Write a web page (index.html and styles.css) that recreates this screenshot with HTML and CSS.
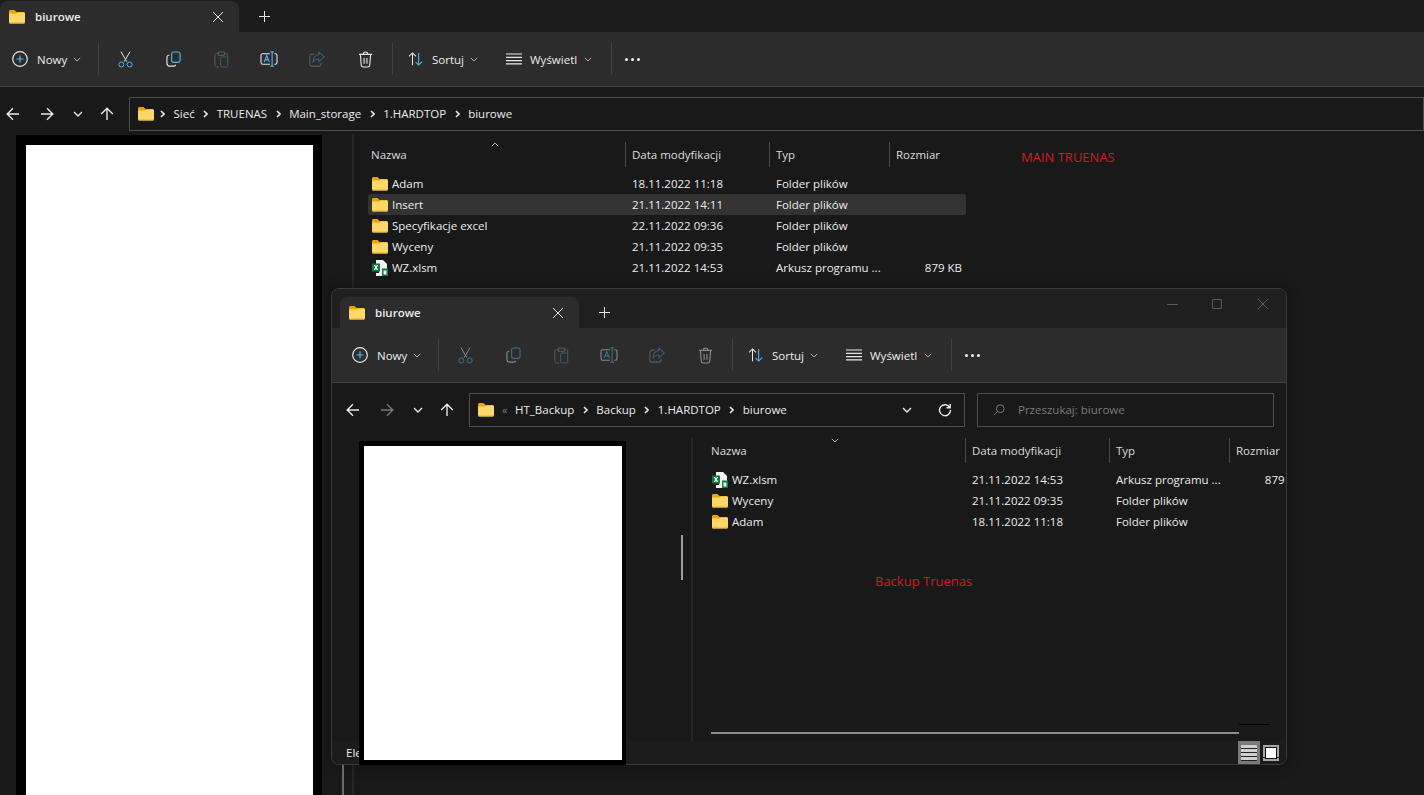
FILE: index.html
```html
<!DOCTYPE html>
<html lang="pl">
<head>
<meta charset="utf-8">
<title>biurowe</title>
<link rel="stylesheet" href="styles.css">
</head>
<body>
<svg class="defs" width="0" height="0" aria-hidden="true">
  <symbol id="i-folder" viewBox="0 0 16 16">
    <path class="f-back" d="M0 2.500C0 1.700.6 1 1.500 1h4l2 2h7C15.300 3 16 3.700 16 4.500V7H0z"/>
    <path class="f-front" d="M0 4.500h7.500l1.500-1h5.500c.8 0 1.500.7 1.500 1.500v8c0 .9-.7 1.500-1.500 1.500h-13C.6 14.500 0 13.900 0 13z"/>
    <path class="f-edge" d="M0 13.500h16v.3c0 .4-.7.7-1.500.7h-13C.6 14.500 0 14.200 0 13.800z"/>
  </symbol>
  <symbol id="i-excel" viewBox="0 0 16 16">
    <path class="x-paper" d="M4 0h7l4 4v5h-3v4h3v3H4v-3h3V4H4z"/>
    <rect class="x-green" x="0" y="3.500" width="8" height="8"/>
    <path class="x-letter" d="M1.800 5h1.400L4 6.500 4.800 5h1.400L4.800 7.500 6.200 10H4.800L4 8.500 3.200 10H1.800L3.200 7.500z"/>
    <rect class="x-green" x="10" y="8.500" width="6" height="7.500"/>
    <rect class="x-paper" x="11.500" y="10.500" width="3" height="4"/>
  </symbol>
  <symbol id="i-new" viewBox="0 0 16 16">
    <circle class="s-w" cx="8" cy="8" r="7.300"/>
    <path class="s-b" d="M8 4.500v7M4.500 8h7"/>
  </symbol>
  <symbol id="i-cut" viewBox="0 0 18 20">
    <path class="s-w" d="M3.500 0.500 10.500 12.500M14.500 0.500 7.500 12.500"/>
    <circle class="s-b" cx="4" cy="16" r="3"/>
    <circle class="s-b" cx="14" cy="16" r="3"/>
  </symbol>
  <symbol id="i-copy" viewBox="0 0 16 18">
    <rect class="s-b" x="6" y="1" width="9" height="11" rx="2"/>
    <path class="s-w" d="M3.500 4.500H3C1.900 4.500 1 5.400 1 6.500V13c0 1.700 1.300 3 3 3h4.500c.8 0 1.500-.6 1.800-1.400"/>
  </symbol>
  <symbol id="i-paste" viewBox="0 0 18 20">
    <path class="s-g" d="M5 3H3C1.900 3 1 3.900 1 5v12c0 1.100.9 2 2 2h3M13 3h2c.9 0 1.500.6 1.500 1.500V7M5.500 1h7v4h-7z"/>
    <rect class="s-bd" x="8" y="7" width="8.500" height="12" rx="1.500"/>
  </symbol>
  <symbol id="i-rename" viewBox="0 0 20 18">
    <path class="s-w" d="M11 3H3C1.900 3 1 3.900 1 5v8c0 1.100.9 2 2 2h8M16 3h1c1.100 0 2 .9 2 2v8c0 1.100-.9 2-2 2h-1"/>
    <path class="s-b" d="M11.500 1h4M13.500 1v16M11.500 17h4M4.500 12.500 7.500 5 10.500 12.500M5.500 10h4"/>
  </symbol>
  <symbol id="i-share" viewBox="0 0 18 18">
    <path class="s-g" d="M6 3.500H3.500C2.100 3.500 1 4.600 1 6v8.500C1 15.900 2.100 17 3.500 17H11c1.400 0 2.500-1.100 2.500-2.500V13"/>
    <path class="s-bd" d="M11 1 17 6.500 11 12V9C8 9 6 10 4.500 13 4.500 8 7 4.500 11 4z"/>
  </symbol>
  <symbol id="i-trash" viewBox="0 0 16 18">
    <path class="s-w" d="M1 3.500h14M5.500 3.500C5.500 2 6.500 1 8 1s2.500 1 2.500 2.500M2.500 3.500 3.500 15c.1 1.100 1 2 2 2h5c1 0 1.900-.9 2-2l1-11.500M6.500 7.500v6M9.500 7.500v6"/>
  </symbol>
  <symbol id="i-sort" viewBox="0 0 18 16">
    <path class="s-w" d="M5 15V1M1 5 5 1 9 5"/>
    <path class="s-b" d="M12 1v14M8.500 11.500 12 15 16 11"/>
  </symbol>
  <symbol id="i-view" viewBox="0 0 16 12">
    <path class="s-w" d="M0 1h16M0 4.300h16M0 7.600h16M0 10.900h16"/>
  </symbol>
  <symbol id="i-chev" viewBox="0 0 8 5"><path class="s-c" d="M.8.800 4 4 7.200.800"/></symbol>
  <symbol id="i-left" viewBox="0 0 14 14"><path class="s-n" d="M13 7H1.500M7 1.200 1.200 7 7 12.800"/></symbol>
  <symbol id="i-right" viewBox="0 0 14 14"><path class="s-n" d="M1 7h11.500M7 1.200 12.800 7 7 12.800"/></symbol>
  <symbol id="i-up" viewBox="0 0 14 14"><path class="s-n" d="M7 13V1.500M1.200 7 7 1.200 12.800 7"/></symbol>
  <symbol id="i-down" viewBox="0 0 10 6"><path class="s-n" d="M1 1 5 5 9 1"/></symbol>
  <symbol id="i-crumb" viewBox="0 0 5 8"><path class="s-k" d="M1 1 4 4 1 7"/></symbol>
</svg>

<!-- tylne okno -->
<main class="win win-main">
  <header class="tabbar">
    <div class="tab">
      <svg class="ico-16"><use href="#i-folder"/></svg>
      <span class="tab-title">biurowe</span>
      <span class="tab-x"></span>
    </div>
    <span class="tab-plus"></span>
  </header>
  <div class="toolbar">
    <div class="tb-new"><svg class="ico-16"><use href="#i-new"/></svg><span>Nowy</span><svg class="chev"><use href="#i-chev"/></svg></div>
    <i class="tb-sep"></i>
    <div class="tb-actions">
      <span class="tb-act"><svg class="ico-cut"><use href="#i-cut"/></svg></span>
      <span class="tb-act"><svg class="ico-copy"><use href="#i-copy"/></svg></span>
      <span class="tb-act dim"><svg class="ico-cut"><use href="#i-paste"/></svg></span>
      <span class="tb-act"><svg class="ico-ren"><use href="#i-rename"/></svg></span>
      <span class="tb-act dim"><svg class="ico-share"><use href="#i-share"/></svg></span>
      <span class="tb-act"><svg class="ico-copy"><use href="#i-trash"/></svg></span>
    </div>
    <i class="tb-sep"></i>
    <div class="tb-sort"><svg class="ico-sort"><use href="#i-sort"/></svg><span>Sortuj</span><svg class="chev"><use href="#i-chev"/></svg></div>
    <div class="tb-view"><svg class="ico-view"><use href="#i-view"/></svg><span>Wyświetl</span><svg class="chev"><use href="#i-chev"/></svg></div>
    <i class="tb-sep tb-sep-flat"></i>
    <div class="tb-more"><b></b><b></b><b></b></div>
  </div>
  <nav class="navrow">
    <div class="navbtns">
      <svg class="nav-ic"><use href="#i-left"/></svg>
      <svg class="nav-ic"><use href="#i-right"/></svg>
      <svg class="nav-dn"><use href="#i-down"/></svg>
      <svg class="nav-ic"><use href="#i-up"/></svg>
    </div>
    <div class="addr">
      <svg class="ico-16"><use href="#i-folder"/></svg>
      <svg class="crumb"><use href="#i-crumb"/></svg><span>Sieć</span>
      <svg class="crumb"><use href="#i-crumb"/></svg><span>TRUENAS</span>
      <svg class="crumb"><use href="#i-crumb"/></svg><span>Main_storage</span>
      <svg class="crumb"><use href="#i-crumb"/></svg><span>1.HARDTOP</span>
      <svg class="crumb"><use href="#i-crumb"/></svg><span>biurowe</span>
    </div>
  </nav>
  <section class="content">
    <aside class="side"></aside>
    <div class="files">
      <div class="cols colhead">
        <span class="col"><em>Nazwa</em><svg class="sortmark"><use href="#i-chev"/></svg></span>
        <span class="col"><em>Data modyfikacji</em></span>
        <span class="col"><em>Typ</em></span>
        <span class="col"><em>Rozmiar</em></span>
        <span class="note-main">MAIN TRUENAS</span>
      </div>
      <div class="cols row"><span class="name"><svg class="ico-16"><use href="#i-folder"/></svg>Adam</span><span class="date">18.11.2022 11:18</span><span class="type">Folder plików</span><span class="size"></span></div>
      <div class="cols row hl"><span class="name"><svg class="ico-16"><use href="#i-folder"/></svg>Insert</span><span class="date">21.11.2022 14:11</span><span class="type">Folder plików</span><span class="size"></span></div>
      <div class="cols row"><span class="name"><svg class="ico-16"><use href="#i-folder"/></svg>Specyfikacje excel</span><span class="date">22.11.2022 09:36</span><span class="type">Folder plików</span><span class="size"></span></div>
      <div class="cols row"><span class="name"><svg class="ico-16"><use href="#i-folder"/></svg>Wyceny</span><span class="date">21.11.2022 09:35</span><span class="type">Folder plików</span><span class="size"></span></div>
      <div class="cols row"><span class="name"><svg class="ico-16"><use href="#i-excel"/></svg>WZ.xlsm</span><span class="date">21.11.2022 14:53</span><span class="type">Arkusz programu ...</span><span class="size">879 KB</span></div>
    </div>
  </section>
</main>

<!-- okno na wierzchu -->
<section class="win win-front">
  <header class="tabbar">
    <div class="tab">
      <svg class="ico-16"><use href="#i-folder"/></svg>
      <span class="tab-title">biurowe</span>
      <span class="tab-x"></span>
    </div>
    <span class="tab-plus"></span>
    <div class="winctl">
      <span class="ctl-min"></span>
      <span class="ctl-max"></span>
      <span class="ctl-close"></span>
    </div>
  </header>
  <div class="toolbar">
    <div class="tb-new"><svg class="ico-16"><use href="#i-new"/></svg><span>Nowy</span><svg class="chev"><use href="#i-chev"/></svg></div>
    <i class="tb-sep"></i>
    <div class="tb-actions">
      <span class="tb-act dim"><svg class="ico-cut"><use href="#i-cut"/></svg></span>
      <span class="tb-act dim"><svg class="ico-copy"><use href="#i-copy"/></svg></span>
      <span class="tb-act dim"><svg class="ico-cut"><use href="#i-paste"/></svg></span>
      <span class="tb-act dim"><svg class="ico-ren"><use href="#i-rename"/></svg></span>
      <span class="tb-act dim"><svg class="ico-share"><use href="#i-share"/></svg></span>
      <span class="tb-act dim"><svg class="ico-copy"><use href="#i-trash"/></svg></span>
    </div>
    <i class="tb-sep"></i>
    <div class="tb-sort"><svg class="ico-sort"><use href="#i-sort"/></svg><span>Sortuj</span><svg class="chev"><use href="#i-chev"/></svg></div>
    <div class="tb-view"><svg class="ico-view"><use href="#i-view"/></svg><span>Wyświetl</span><svg class="chev"><use href="#i-chev"/></svg></div>
    <i class="tb-sep tb-sep-flat"></i>
    <div class="tb-more"><b></b><b></b><b></b></div>
  </div>
  <nav class="navrow">
    <div class="navbtns">
      <svg class="nav-ic"><use href="#i-left"/></svg>
      <svg class="nav-ic dim-nav"><use href="#i-right"/></svg>
      <svg class="nav-dn"><use href="#i-down"/></svg>
      <svg class="nav-ic"><use href="#i-up"/></svg>
    </div>
    <div class="addr">
      <svg class="ico-16"><use href="#i-folder"/></svg>
      <span class="crumb-more">«</span><span>HT_Backup</span>
      <svg class="crumb"><use href="#i-crumb"/></svg><span>Backup</span>
      <svg class="crumb"><use href="#i-crumb"/></svg><span>1.HARDTOP</span>
      <svg class="crumb"><use href="#i-crumb"/></svg><span>biurowe</span>
      <svg class="addr-dn"><use href="#i-down"/></svg>
      <svg class="addr-ref" viewBox="0 0 14 14"><path class="s-n" d="M11.800 4.500A5.500 5.500 0 1 0 12.500 7M12.200 1v3.700H8.500"/></svg>
    </div>
    <div class="search">
      <svg class="search-ic" viewBox="0 0 14 14"><circle class="s-s" cx="8.500" cy="5.500" r="4.500"/><path class="s-s" d="M5.300 8.700.8 13.200"/></svg>
      <span>Przeszukaj: biurowe</span>
    </div>
  </nav>
  <div class="content">
    <aside class="side"><i class="side-thumb"></i></aside>
    <div class="files">
      <div class="cols colhead">
        <span class="col"><em>Nazwa</em><svg class="sortmark"><use href="#i-chev"/></svg></span>
        <span class="col"><em>Data modyfikacji</em></span>
        <span class="col"><em>Typ</em></span>
        <span class="col"><em>Rozmiar</em></span>
      </div>
      <div class="cols row"><span class="name"><svg class="ico-16"><use href="#i-excel"/></svg>WZ.xlsm</span><span class="date">21.11.2022 14:53</span><span class="type">Arkusz programu ...</span><span class="size">879 KB</span></div>
      <div class="cols row"><span class="name"><svg class="ico-16"><use href="#i-folder"/></svg>Wyceny</span><span class="date">21.11.2022 09:35</span><span class="type">Folder plików</span><span class="size"></span></div>
      <div class="cols row"><span class="name"><svg class="ico-16"><use href="#i-folder"/></svg>Adam</span><span class="date">18.11.2022 11:18</span><span class="type">Folder plików</span><span class="size"></span></div>
      <p class="note-backup">Backup Truenas</p>
      <div class="hscroll"><i class="hscroll-bar"></i><i class="hscroll-tick"></i></div>
    </div>
  </div>
  <footer class="status">
    <span>Elementy: 3</span>
    <div class="viewbtns">
      <span class="vbtn on"><i class="v-list"></i></span>
      <span class="vbtn"><i class="v-tile"></i></span>
    </div>
  </footer>
</section>

<!-- zamazania i ślady tylnego okna -->
<div class="redact redact-a"></div>
<div class="redact redact-b"></div>
<i class="below-line"></i>
</body>
</html>
```

FILE: styles.css
```css
* { box-sizing: border-box; }
html, body { margin: 0; height: 795px; overflow: hidden; }
body {
  position: relative;
  width: 1424px;
  background: #191919;
  color: #ececec;
  font: 11.5px/16px "Open Sans", "Noto Sans", sans-serif;
}
.defs { position: absolute; }

/* symbol paints */
.f-back { fill: #e9a60c; }
.f-front { fill: #fdd768; }
.f-edge { fill: #e9ae2b; }
.x-paper { fill: #f2f2f2; }
.x-green { fill: #107c41; }
.x-letter { fill: #fff; }
.s-w, .s-b, .s-g, .s-bd, .s-c, .s-n, .s-k, .s-s { fill: none; stroke-width: 1.2; }
.s-w { stroke: #e6e6e6; }
.s-b { stroke: #4cb8f5; }
.s-g { stroke: #8c8c8c; }
.s-bd { stroke: #4a90bd; }
.s-c { stroke: #b0b0b0; stroke-width: 1; }
.s-n { stroke: #eaeaea; stroke-width: 1.4; }
.s-k { stroke: #e6e6e6; stroke-width: 1.6; }
.s-s { stroke: #8a8a8a; stroke-width: 1; }

.ico-16 { width: 16px; height: 16px; flex: none; }
.ico-cut { width: 15px; height: 17px; }
.ico-copy { width: 15px; height: 17px; }
.ico-ren { width: 18px; height: 16px; }
.ico-share { width: 16px; height: 16px; }
.ico-sort { width: 16px; height: 14px; flex: none; }
.ico-view { width: 16px; height: 12px; flex: none; }
.chev { width: 8px; height: 5px; flex: none; margin-left: auto; }

/* window */
.win { display: flex; flex-direction: column; }
.win-main { height: 795px; }
.win-front {
  position: absolute;
  left: 331px;
  top: 288px;
  width: 956px;
  height: 477px;
  border: 1px solid #3c3c3c;
  border-radius: 8px;
  overflow: hidden;
  background: #191919;
  box-shadow: 0 0 14px rgba(0, 0, 0, .35);
}

/* tab bar */
.tabbar { display: flex; align-items: flex-end; flex: none; background: #1c1c1c; }
.win-main .tabbar { height: 32px; }
.win-front .tabbar { height: 39px; padding-left: 8px; background: #202020; }
.tab {
  display: flex;
  align-items: center;
  width: 239px;
  height: 31px;
  padding: 0 16px 0 9px;
  background: #2c2c2c;
  border-radius: 8px 8px 0 0;
}
.tab-title { margin-left: 10px; font-weight: 600; }
.tab-x {
  position: relative;
  width: 10px;
  height: 10px;
  margin-left: auto;
  background:
    linear-gradient(45deg, transparent 46%, #e8e8e8 46%, #e8e8e8 54%, transparent 54%),
    linear-gradient(-45deg, transparent 46%, #e8e8e8 46%, #e8e8e8 54%, transparent 54%);
}
.tab-plus {
  width: 11px;
  height: 11px;
  margin: 0 0 10px 20px;
  background:
    linear-gradient(#e8e8e8, #e8e8e8) center / 100% 1px no-repeat,
    linear-gradient(#e8e8e8, #e8e8e8) center / 1px 100% no-repeat;
}
.winctl { display: flex; align-items: center; margin-left: auto; align-self: flex-start; height: 30px; padding-right: 18px; }
.ctl-min { width: 11px; height: 1px; margin-right: 34px; background: #5c5c5c; }
.ctl-max { width: 10px; height: 10px; margin-right: 36px; border: 1px solid #5c5c5c; border-radius: 1px; }
.ctl-close {
  width: 10px;
  height: 10px;
  background:
    linear-gradient(45deg, transparent 46%, #5c5c5c 46%, #5c5c5c 54%, transparent 54%),
    linear-gradient(-45deg, transparent 46%, #5c5c5c 46%, #5c5c5c 54%, transparent 54%);
}

/* toolbar */
.toolbar {
  display: flex;
  align-items: center;
  flex: none;
  height: 55px;
  background: #2c2c2c;
  border-bottom: 1px solid #414141;
}
.win-front .toolbar { padding-left: 8px; }
.tb-new { display: flex; align-items: center; width: 98px; padding: 0 17px 0 12px; }
.tb-new span { margin: 2px 0 0 9px; }
.tb-sep { width: 1px; height: 32px; background: #414141; flex: none; }
.tb-actions { display: flex; padding: 0 3px 0 2px; }
.tb-act { display: flex; align-items: center; justify-content: center; width: 48px; height: 32px; }
.dim { opacity: .5; }
.tb-sort { display: flex; align-items: center; width: 100px; padding: 0 15px; }
.tb-sort span { margin: 2px 0 0 8px; }
.tb-view { display: flex; align-items: center; width: 118px; padding: 0 19px 0 13px; }
.tb-view span { margin: 2px 0 0 8px; }
.tb-more { display: flex; gap: 3px; margin-left: 13px; }
.tb-more b { width: 3px; height: 3px; border-radius: 50%; background: #f0f0f0; }

/* navigation row */
.navrow { display: flex; flex: none; padding-top: 10px; }
.win-main .navrow { height: 47px; }
.win-front .navrow { height: 55px; padding-right: 12px; }
.navbtns { display: flex; align-items: center; width: 129px; height: 34px; }
.win-front .navbtns { width: 137px; padding-left: 8px; }
.nav-ic { width: 14px; height: 14px; flex: none; margin-left: 6px; }
.nav-ic + .nav-ic { margin-left: 20px; }
.nav-dn { width: 10px; height: 6px; flex: none; margin: 0 11px 0 19px; }
.nav-dn + .nav-ic { margin-left: 6px; }
.dim-nav { opacity: .45; }
.addr {
  display: flex;
  align-items: center;
  flex: 1;
  height: 34px;
  padding: 0 8px;
  border: 1px solid #4e4e4e;
}
.crumb { width: 5px; height: 8px; flex: none; margin: 0 8.5px; }
.addr > .ico-16 + .crumb { margin-left: 6px; }
.addr span { white-space: nowrap; }
.win-front .addr { flex: none; width: 496px; margin-right: 12px; }
.crumb-more { width: 21px; padding-left: 8px; color: #7a7a7a; font-size: 11px; }
.addr-dn { width: 10px; height: 6px; margin-left: auto; }
.addr-ref { width: 14px; height: 14px; flex: none; margin: 0 4px 0 26px; }
.search {
  display: flex;
  align-items: center;
  width: 297px;
  height: 34px;
  padding-left: 15px;
  border: 1px solid #4e4e4e;
  color: #7b7b7b;
}
.search-ic { width: 12px; height: 12px; margin-right: 13px; }

/* content */
.content { display: flex; flex: 1; min-height: 0; }
.win-main .content { padding-top: 8px; }
.side { flex: none; border-right: 2px solid #272727; }
.win-main .side { width: 354px; margin-top: -8px; }
.win-front .side { width: 361px; padding: 97px 0 0 349px; }
.side-thumb { display: block; width: 2px; height: 45px; background: #9c9c9c; }
.files { display: flex; flex-direction: column; flex: 1; min-width: 0; position: relative; }
.win-main .files { padding-left: 14px; }
.win-front .files { padding-left: 15px; }
.cols { display: grid; grid-template-columns: 257px 144px 120px 81px; }
.colhead { position: relative; height: 25px; margin-bottom: 6px; }
.col { position: relative; display: flex; align-items: center; padding-left: 6px; border-left: 1px solid #4a4a4a; color: #dcdcdc; }
.col:first-child { padding-left: 3px; border-left: 0; }
.col:last-of-type { border-right: 1px solid #4a4a4a; }
.col em { font-style: normal; }
.sortmark { position: absolute; left: 123px; top: 0; width: 8px; height: 5px; }
.win-main .sortmark { transform: scaleY(-1); }
.note-main { position: absolute; left: 653px; top: 7px; color: #d21a23; font-size: 13px; white-space: nowrap; }
.row { flex: none; height: 21px; align-items: center; white-space: nowrap; }
.row > span { padding-left: 7px; overflow: hidden; }
.row .name { display: flex; align-items: center; gap: 4px; padding-left: 4px; }
.row .size { padding-right: 8px; text-align: right; }
.hl { width: 598px; background: #333; border-radius: 2px; }
.note-backup { position: absolute; left: 182px; top: 135px; margin: 0; color: #d21a23; font-size: 13px; white-space: nowrap; }
.hscroll { position: relative; margin-top: auto; margin-bottom: 7px; }
.hscroll-bar { display: block; width: 528px; height: 2px; margin-left: 3px; background: #8c8c8c; }
.hscroll-tick { position: absolute; left: 531px; top: -8px; width: 30px; height: 1px; background: #000; }

/* status bar */
.status {
  display: flex;
  align-items: center;
  flex: none;
  height: 23px;
  padding: 0 7px 0 14px;
  background: #1c1c1c;
}
.viewbtns { display: flex; align-items: center; gap: 3px; margin-left: auto; height: 100%; }
.vbtn { display: flex; align-items: center; justify-content: center; width: 16px; height: 23px; }
.vbtn.on { width: 22px; background: #7a7a7a; }
.v-list {
  display: block;
  width: 16px;
  height: 16px;
  padding: 2px 0;
  border-radius: 1px;
  background: repeating-linear-gradient(#cfcfcf 0 3px, #222 3px 4px);
}
.v-tile {
  display: block;
  width: 16px;
  height: 16px;
  padding: 2px 2px 4px;
  background: linear-gradient(#a6a6a6 0 12px, #222 12px 13px, #a6a6a6 13px);
}
.v-tile::before { content: ""; display: block; height: 100%; border: 1px solid #111; background: #fff; }

/* overlays */
.redact { position: absolute; background: #fff; }
.redact-a { left: 16px; top: 135px; width: 306px; height: 660px; border: solid #000; border-width: 10px 9px 0 10px; }
.redact-b { left: 359px; top: 441px; width: 267px; height: 324px; border: solid #000; border-width: 5px 4px 5px 5px; }
.below-line { position: absolute; left: 342px; top: 765px; width: 2px; height: 30px; background: #6a6a6a; }
```
